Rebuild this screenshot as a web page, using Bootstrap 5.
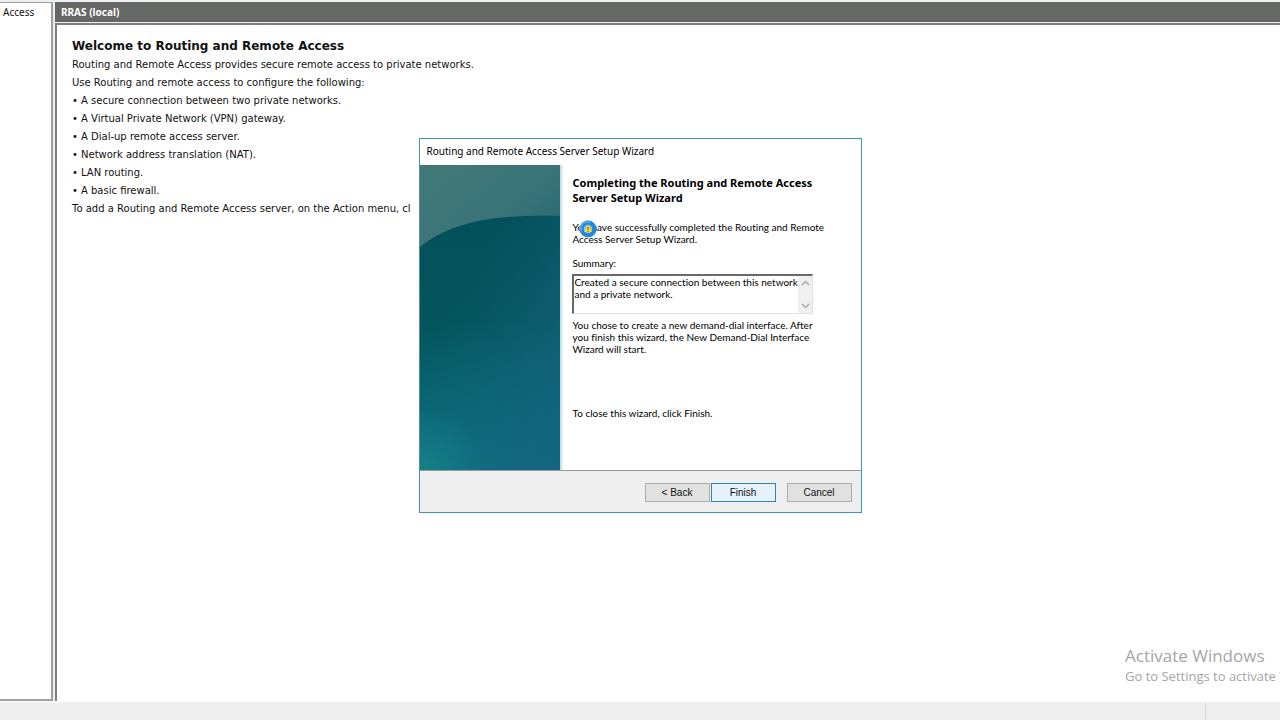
<!DOCTYPE html>
<html lang="en">
<head>
<meta charset="utf-8">
<meta name="viewport" content="width=device-width, initial-scale=1">
<title>Routing and Remote Access</title>
<link href="https://cdn.jsdelivr.net/npm/bootstrap@5.3.0/dist/css/bootstrap.min.css" rel="stylesheet">
<style>
body { background: #eee; color: #111; font-family: "DejaVu Sans", sans-serif; font-size: 10px; line-height: 18px; }
main { padding-top: 2px; gap: 2px; }
.tree-pane { flex: 0 0 53px; border: solid #a0a0a0; border-width: 1px 2px 2px 0; padding: 0 3px; font: 10px/18px "Noto Sans", sans-serif; }
.detail-pane { min-width: 0; }
.pane-title { background: #666865; color: #fff; font: bold 10px/20px "Noto Sans", sans-serif; padding: 0 6px; }
.pane-body { border-left: 2px solid #808080; border-top: 2px solid #808080; margin-top: 1px; padding: 12px 15px; }
.pane-body h1 { font-size: 12px; line-height: 18px; font-weight: bold; margin: 0 0 1px; }
.pane-body ul { list-style: none; }
.pane-body li::before { content: "•"; display: inline-block; width: 9px; }
.activate { right: 0; bottom: 34px; width: 155px; color: #a5a5a5; font: 13px/20px "Open Sans", sans-serif; }
.activate strong { font-size: 17px; font-weight: 400; }
.status-bar { height: 19px; border-top: 2px solid #f7f7f7; }
.status-bar span { width: 75px; border-left: 1px solid #d8d8d8; }
.dialog-layer { padding-bottom: 70px; }
.wizard { width: 443px; background: #fff; border: 1px solid #3d96b5; font: 10px/12px Lato, sans-serif; font-variant-ligatures: none; color: #000; }
.wizard header { font: 10px/24px "Noto Sans", sans-serif; padding: 0 7px 2px; }
.banner { flex: 0 0 140px; }
.banner svg { width: 140px; height: 305px; }
.edge { width: 4px; background: linear-gradient(90deg, #c9d4db, #f4f6f7); }
.page { padding: 10px 38px 0 9px; min-width: 0; }
.page h2 { font: bold 11px/15px "Noto Sans", sans-serif; margin: 0 0 16px; }
.page p { white-space: nowrap; }
.page label { margin-bottom: 5px; }
.summary { width: 241px; height: 40px; border: solid #e3e3e3; border-width: 2px 1px 1px 2px; border-top-color: #696969; border-left-color: #696969; }
.summary textarea { border: 0; padding: 0; outline: 0; resize: none; overflow: hidden; white-space: pre; font: inherit; color: inherit; min-width: 0; background: #fff; }
.scroller { width: 14px; background: #f0f0f0; }
.scroller button { border: 0; padding: 0; background: none; height: 15px; line-height: 0; }
.result { margin: 5px 0 52px; }
.wizard footer { background: #efefef; border-top: 1px solid #999; height: 42px; padding: 12px 9px 0; }
.wizard footer .btn { width: 65px; height: 19px; padding: 0; border: 1px solid #adadad; border-radius: 0; background: #e1e1e1; color: #111; font: 10px/17px "Liberation Sans", sans-serif; }
.wizard footer .btn.default { background: #e5f1fb; border-color: #2f86a8; margin: 0 11px 0 1px; }
.busy { left: 7px; top: -1px; width: 18px; height: 18px; }
</style>
</head>
<body class="vh-100 d-flex flex-column overflow-hidden position-relative">
<main class="d-flex flex-grow-1">
  <aside class="tree-pane bg-white">Access</aside>
  <section class="detail-pane flex-grow-1 d-flex flex-column">
    <div class="pane-title">RRAS (local)</div>
    <div class="pane-body bg-white flex-grow-1">
      <h1>Welcome to Routing and Remote Access</h1>
      <p class="m-0">Routing and Remote Access provides secure remote access to private networks.</p>
      <p class="m-0">Use Routing and remote access to configure the following:</p>
      <ul class="m-0 p-0">
        <li>A secure connection between two private networks.</li>
        <li>A Virtual Private Network (VPN) gateway.</li>
        <li>A Dial-up remote access server.</li>
        <li>Network address translation (NAT).</li>
        <li>LAN routing.</li>
        <li>A basic firewall.</li>
      </ul>
      <p class="m-0">To add a Routing and Remote Access server, on the Action menu, cl</p>
    </div>
  </section>
</main>
<div class="status-bar d-flex justify-content-end flex-shrink-0"><span></span></div>
<div class="activate position-absolute text-nowrap"><strong class="d-block">Activate Windows</strong>Go to Settings to activate W</div>

<div class="dialog-layer position-absolute top-0 start-0 w-100 h-100 d-flex align-items-center justify-content-center">
  <div class="wizard" role="dialog" aria-labelledby="wizard-title">
    <header id="wizard-title">Routing and Remote Access Server Setup Wizard</header>
    <div class="d-flex">
      <div class="banner">
        <svg class="d-block" viewBox="0 0 141 305" preserveAspectRatio="none" aria-hidden="true">
          <defs>
            <linearGradient id="sky" x1="0" y1="0" x2="1" y2="1"><stop offset="0" stop-color="#427877"/><stop offset=".5" stop-color="#3a7478"/><stop offset="1" stop-color="#1d6470"/></linearGradient>
            <linearGradient id="sea" x1="0" y1="0" x2="0" y2="1"><stop offset="0" stop-color="#03505a"/><stop offset=".4" stop-color="#04545c"/><stop offset="1" stop-color="#0a7480"/></linearGradient>
            <linearGradient id="side" x1="0" y1="0" x2="1" y2="1"><stop offset=".3" stop-color="#17637f" stop-opacity="0"/><stop offset="1" stop-color="#17637f" stop-opacity=".9"/></linearGradient>
            <radialGradient id="glow" cx="0" cy="1" r=".45"><stop offset="0" stop-color="#1b8b90" stop-opacity=".6"/><stop offset="1" stop-color="#1b8b90" stop-opacity="0"/></radialGradient>
          </defs>
          <rect width="141" height="110" fill="url(#sky)"/>
          <path d="M0 82C30 58 72 49 141 51V305H0Z" fill="url(#sea)"/>
          <path d="M0 82C30 58 72 49 141 51V305H0Z" fill="url(#side)"/>
          <rect y="160" width="141" height="145" fill="url(#glow)"/>
        </svg>
      </div>
      <div class="edge"></div>
      <div class="page flex-grow-1">
        <h2>Completing the Routing and Remote Access<br>Server Setup Wizard</h2>
        <p class="mb-2 pb-1 position-relative">You have successfully completed the Routing and Remote<br>Access Server Setup Wizard.
          <svg class="busy position-absolute" viewBox="0 0 18 18" aria-hidden="true"><circle cx="9" cy="9" r="8.5" fill="#2486dd"/><path d="M2 11A7 7 0 0 1 11 2" fill="none" stroke="#5aaef0" stroke-width="2"/><circle cx="9" cy="9" r="4.2" fill="#a9c5b8"/><path d="M9 5L13 12H5Z" fill="#f0d83c"/><path d="M9 7V10M9 11V12" stroke="#655d35"/></svg>
        </p>
        <label for="summary" class="d-block">Summary:</label>
        <div class="summary d-flex">
          <textarea id="summary" class="flex-grow-1" readonly>Created a secure connection between this network
and a private network.</textarea>
          <div class="scroller d-flex flex-column justify-content-between">
            <button type="button" aria-label="Scroll up"><svg width="9" height="7" viewBox="0 0 9 7"><path d="M1 5L4.500 1.500L8 5" fill="none" stroke="#aaa" stroke-width="1.500"/></svg></button>
            <button type="button" aria-label="Scroll down"><svg width="9" height="7" viewBox="0 0 9 7"><path d="M1 2L4.500 5.500L8 2" fill="none" stroke="#aaa" stroke-width="1.500"/></svg></button>
          </div>
        </div>
        <p class="result">You chose to create a new demand-dial interface. After<br>you finish this wizard, the New Demand-Dial Interface<br>Wizard will start.</p>
        <p class="mb-0">To close this wizard, click Finish.</p>
      </div>
    </div>
    <footer class="d-flex justify-content-end">
      <button type="button" class="btn">&lt; Back</button>
      <button type="button" class="btn default">Finish</button>
      <button type="button" class="btn">Cancel</button>
    </footer>
  </div>
</div>
<script src="https://cdn.jsdelivr.net/npm/bootstrap@5.3.0/dist/js/bootstrap.bundle.min.js"></script>
</body>
</html>
